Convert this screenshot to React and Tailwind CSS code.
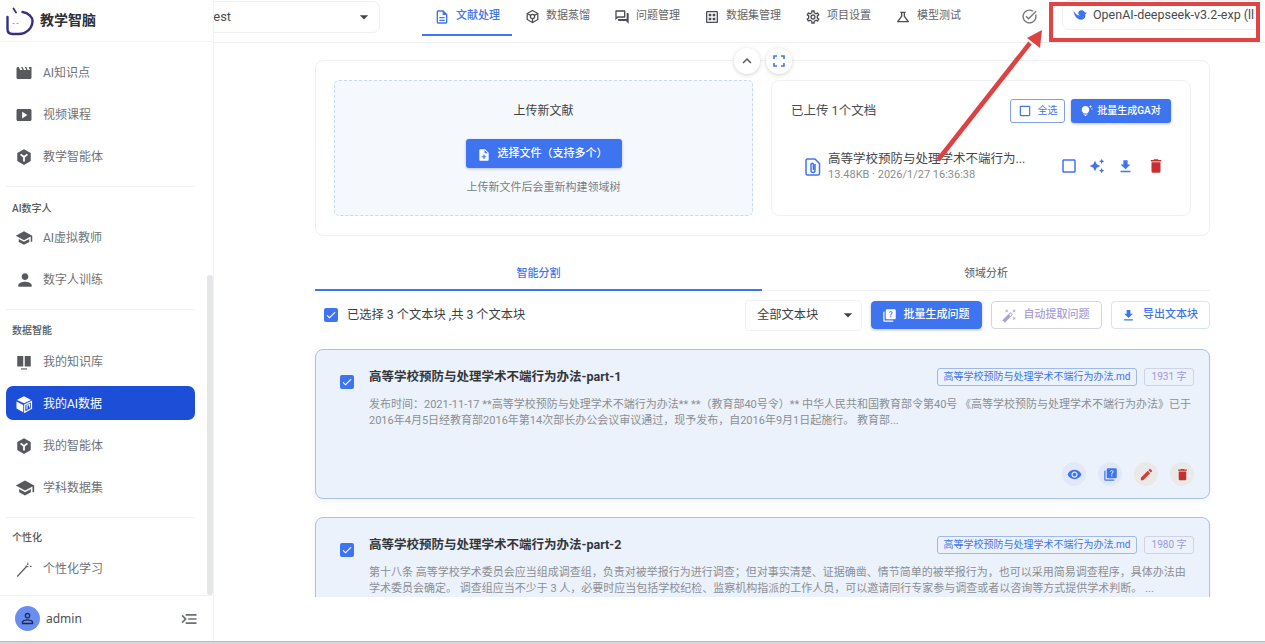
import React from "react";
import {
    MdAutoAwesome,
    MdAutoFixHigh,
    MdCheck,
    MdCheckBoxOutlineBlank,
    MdDelete,
    MdEdit,
    MdFileDownload,
    MdKeyboardArrowUp,
    MdMenuOpen,
    MdMovie,
    MdNoteAdd,
    MdOutlineDataset,
    MdOutlineDescription,
    MdOutlineForum,
    MdOutlineScience,
    MdOutlineSettings,
    MdPerson,
    MdPersonOutline,
    MdQuiz,
    MdSchool,
    MdSmartDisplay,
    MdTaskAlt,
    MdTipsAndUpdates,
    MdVisibility,
    MdArrowDropDown,
} from "react-icons/md";

const font = "font-['Roboto','Noto_Sans_CJK_SC',sans-serif]";

function HexIcon({ size = 18, outline = false }) {
    if (outline) {
        return (
            <svg width={size} height={size} viewBox="0 0 24 24" fill="none" stroke="currentColor" strokeWidth="2">
                <path d="M12 2.5l8.5 4.8v9.4L12 21.5l-8.5-4.8V7.3z" />
                <circle cx="12" cy="12" r="3.4" />
                <path d="M12 15.4v6M9 10.2L3.5 7.3M15 10.2l5.5-2.9" />
            </svg>
        );
    }
    return (
        <svg width={size} height={size} viewBox="0 0 24 24">
            <path d="M12 1.5l9 5.2v10.6l-9 5.2-9-5.2V6.7z" fill="currentColor" />
            <path d="M7.5 8.5L12 12l4.5-3.5M12 12v6" stroke="#fff" strokeWidth="2.4" fill="none" />
        </svg>
    );
}

function CubeIcon() {
    return (
        <svg width="18" height="18" viewBox="0 0 24 24">
            <path d="M12 1.5l9.5 5L12 11 2.5 6.500z" fill="#fff" />
            <path d="M2 8.500l9 4.700V23l-9-5z" fill="#fff" />
            <path d="M13 13.200l9-4.700V18l-9 5z" fill="none" stroke="#fff" strokeWidth="1.600" />
            <path d="M16 19v-5l3.500-1.500v4" fill="none" stroke="#fff" strokeWidth="1.400" />
        </svg>
    );
}

function BookIcon() {
    return (
        <svg width="18" height="18" viewBox="0 0 24 24" fill="currentColor">
            <path d="M3 4h8v14H3zM13 4h8v14h-8z" />
            <path d="M8 20.500h8v1.500H8z" />
        </svg>
    );
}

function WandIcon() {
    return (
        <svg width="18" height="18" viewBox="0 0 24 24" fill="none" stroke="currentColor" strokeWidth="1.500">
            <path d="M3 22L16 8" />
            <path d="M14 8l4 1M17 3.500v3M20 8.500h2" />
        </svg>
    );
}

function ClipFileIcon() {
    return (
        <svg width="16" height="18" viewBox="0 0 16 18" fill="none" stroke="#3f74f0" strokeWidth="1.500">
            <path d="M2.500 1h7.500l4.500 4.500v10a1.500 1.500 0 0 1-1.500 1.500H2.500A1.500 1.500 0 0 1 1 15.500v-13A1.500 1.500 0 0 1 2.500 1z" />
            <path d="M10 6v6.500a2 2 0 0 1-4 0V6.500a1.200 1.200 0 0 1 2.400 0V12" />
        </svg>
    );
}

function WhaleIcon() {
    return (
        <svg width="14" height="12" viewBox="0 0 24 20" fill="#3f74f0" className="shrink-0">
            <path d="M1 3c1 9 6 15 13 15 5 0 8-4 7-9 1-1 2-2 2.500-4-1 .6-2 .8-3 .6C19 3 17 2 14 2c-3 0-5 2-5 5 0 1 1 3 3 4-4 0-8-3-11-8z" />
        </svg>
    );
}

function Logo() {
    return (
        <svg width="34" height="34" viewBox="0 0 34 34" fill="none" strokeLinecap="round" className="shrink-0">
            <path d="M7.500 13v12c0 3 2 5 5 5h6c8 0 14-6 14-13 0-4-4-8-10-9" stroke="#35307f" strokeWidth="2.400" />
            <path d="M13.500 4.500l2.500 4" stroke="#35307f" strokeWidth="1.800" />
            <path d="M13 19.500h1M17 19.500h1" stroke="#9a9ab5" strokeWidth="1" />
        </svg>
    );
}

function Checkbox() {
    return (
        <span className="w-[14px] h-[14px] rounded-[2px] bg-[#3f74f0] flex items-center justify-center text-white shrink-0">
            <MdCheck size={12} />
        </span>
    );
}

function SideItem({ icon, label, active }) {
    return (
        <div
            className={`h-[34px] pt-[2px] ml-[6px] mr-[18px] rounded-[7px] flex items-center text-[12px] ${
                active ? "bg-[#1d4ed8] text-white" : "text-[#6f7276]"
            }`}
        >
            <span className={`w-[37px] pl-[9px] flex items-center ${active ? "text-white" : "text-[#57595d]"}`}>
                {icon}
            </span>
            <span>{label}</span>
        </div>
    );
}

function SideGroup({ title, items, labelClass }) {
    return (
        <div>
            <div className="h-px ml-[6px] mr-[18px] bg-[#f0f1f2]" />
            <div className={`h-[16px] pl-[12px] text-[10px] leading-[16px] text-[#55585c] font-medium ${labelClass}`}>
                {title}
            </div>
            <div className="flex flex-col gap-[8px] pb-[13px]">
                {items.map((it) => (
                    <SideItem key={it.label} {...it} />
                ))}
            </div>
        </div>
    );
}

function Sidebar() {
    return (
        <aside className="w-[214px] shrink-0 border-r border-[#f1f2f3] flex flex-col bg-white">
            <div className="h-[42px] shrink-0 border-b border-[#f2f3f4] flex items-center gap-[6px]">
                <Logo />
                <span className="text-[14px] font-bold text-[#2f3033]">教学智脑</span>
            </div>
            <div className="flex-1 relative overflow-hidden">
                <div className="pt-[13px]">
                    <div className="flex flex-col gap-[8px] pb-[13px]">
                        <SideItem icon={<MdMovie size={18} />} label="AI知识点" />
                        <SideItem icon={<MdSmartDisplay size={18} />} label="视频课程" />
                        <SideItem icon={<HexIcon />} label="教学智能体" />
                    </div>
                    <SideGroup
                        title="AI数字人"
                        labelClass="mt-[14px] mb-[3px]"
                        items={[
                            { icon: <MdSchool size={18} />, label: "AI虚拟教师" },
                            { icon: <MdPerson size={20} />, label: "数字人训练" },
                        ]}
                    />
                    <SideGroup
                        title="数据智能"
                        labelClass="mt-[13px] mb-[5px]"
                        items={[
                            { icon: <BookIcon />, label: "我的知识库" },
                            { icon: <CubeIcon />, label: "我的AI数据", active: true },
                            { icon: <HexIcon />, label: "我的智能体" },
                            { icon: <MdSchool size={20} />, label: "学科数据集" },
                        ]}
                    />
                    <SideGroup
                        title="个性化"
                        labelClass="mt-[12px] mb-[5px]"
                        items={[{ icon: <WandIcon />, label: "个性化学习" }]}
                    />
                </div>
                {/* scrollbar thumb */}
                <div className="absolute right-0 top-[233px] bottom-0 w-[6px] rounded-[3px] bg-[#e4e6e8]" />
            </div>
            <div className="h-[46px] shrink-0 border-t border-[#f1f2f3] flex items-center pl-[15px] pr-[14px] bg-white">
                <span className="w-[25px] h-[25px] rounded-full bg-[#6a8df0] flex items-center justify-center text-[#1c2a55]">
                    <MdPersonOutline size={17} />
                </span>
                <span className="ml-[6px] text-[12px] text-[#4b4e52] font-['Noto_Sans',sans-serif]">admin</span>
                <MdMenuOpen size={20} className="ml-auto text-[#6b6e72] -scale-x-100" />
            </div>
        </aside>
    );
}

const tabs = [
    { label: "文献处理", icon: <MdOutlineDescription size={16} />, active: true },
    { label: "数据蒸馏", icon: <HexIcon size={15} outline /> },
    { label: "问题管理", icon: <MdOutlineForum size={16} /> },
    { label: "数据集管理", icon: <MdOutlineDataset size={16} /> },
    { label: "项目设置", icon: <MdOutlineSettings size={16} /> },
    { label: "模型测试", icon: <MdOutlineScience size={16} /> },
];

function Header() {
    return (
        <header className="h-[43px] shrink-0 border-b border-[#f0f1f2] flex overflow-hidden relative">
            <div className="ml-[-20px] mt-[1px] w-[186px] shrink-0 h-[32px] border border-[#eef0f2] rounded-[7px] flex items-center justify-between pl-[14px] pr-[5px] text-[13px] text-[#4b4e52]">
                <span>test</span>
                <MdArrowDropDown size={20} className="text-[#444]" />
            </div>
            <nav className="ml-[42px] flex items-start h-[36px] shrink-0">
                {tabs.map((t) => (
                    <div
                        key={t.label}
                        className={`h-[36px] px-[12px] pb-[1px] flex items-center gap-[6px] text-[11px] border-b-2 whitespace-nowrap ${
                            t.active ? "border-[#3f74f0] text-[#3f74f0] font-medium" : "border-transparent text-[#63666a]"
                        }`}
                    >
                        <span className={`w-[16px] flex justify-center ${t.active ? "" : "text-[#4b4e52]"}`}>{t.icon}</span>
                        {t.label}
                    </div>
                ))}
            </nav>
            <MdTaskAlt size={17} className="ml-[48px] mt-[8px] shrink-0 text-[#77797d]" />
            <div className="ml-[24px] w-[240px] shrink-0 h-[30px] border border-[#f0f1f2] rounded-[7px] flex items-center pl-[10px] gap-[6px] text-[12.5px] text-[#484b4f] whitespace-nowrap overflow-hidden">
                <WhaleIcon />
                <span>OpenAI-deepseek-v3.2-exp (ll</span>
            </div>
        </header>
    );
}

function OutlineBtn({ children, className = "" }) {
    return (
        <div className={`h-[28px] pt-px rounded-[4px] border flex items-center justify-center gap-[7px] pr-[2px] text-[11px] font-medium ${className}`}>
            {children}
        </div>
    );
}

function UploadPanel() {
    return (
        <div className="relative border border-[#eff1f3] rounded-[8px] px-[18px] py-[19px] flex gap-[18px] h-[176px]">
            <div className="absolute -top-[13px] left-[418px] flex gap-[6px]">
                <span className="w-[26px] h-[26px] rounded-full bg-white shadow-[0_1px_4px_rgba(0,0,0,0.18)] flex items-center justify-center text-[#555]">
                    <MdKeyboardArrowUp size={18} />
                </span>
                <span className="w-[26px] h-[26px] rounded-full bg-white shadow-[0_1px_4px_rgba(0,0,0,0.18)] flex items-center justify-center text-[#3f74f0]">
                    <svg width="12" height="12" viewBox="0 0 12 12" fill="none" stroke="currentColor" strokeWidth="1.600">
                        <path d="M1 4V1h3M8 1h3v3M11 8v3H8M4 11H1V8" />
                    </svg>
                </span>
            </div>
            <div className="w-[419px] border border-dashed border-[#c5d9ef] rounded-[5px] bg-[#f5f9fe] flex flex-col items-center pt-[21px]">
                <div className="text-[12px] leading-[18px] text-[#3c3f43]">上传新文献</div>
                <div className="mt-[19px] w-[156px] h-[29px] pt-[2px] pr-[3px] rounded-[3px] bg-[#3f74f0] text-white flex items-center justify-center gap-[7px] text-[11px] font-medium shadow-[0_1px_3px_rgba(0,0,0,0.25)]">
                    <MdNoteAdd size={14} />
                    选择文件（支持多个）
                </div>
                <div className="mt-[12px] text-[11px] leading-[16px] text-[#7b7e83]">上传新文件后会重新构建领域树</div>
            </div>
            <div className="w-[420px] border border-[#f0f1f3] rounded-[8px] px-[19px] pt-[17px]">
                <div className="flex items-center h-[25px]">
                    <span className="pt-px text-[12.5px] text-[#4a4d51]">已上传 1个文档</span>
                    <div className="ml-auto w-[55px] h-[24px] rounded-[3px] border border-[#7ea0e6] flex items-center justify-center gap-[6px] text-[10px] text-[#3f74f0]">
                        <MdCheckBoxOutlineBlank size={14} />
                        全选
                    </div>
                    <div className="ml-[6px] w-[100px] h-[24px] rounded-[3px] bg-[#3f74f0] text-white flex items-center justify-center gap-[4px] text-[10px] font-medium shadow-[0_1px_3px_rgba(0,0,0,0.25)]">
                        <MdTipsAndUpdates size={12} />
                        批量生成GA对
                    </div>
                </div>
                <div className="mt-[28px] flex items-center pl-[14px]">
                    <ClipFileIcon />
                    <div className="ml-[7px] w-[231px]">
                        <div className="text-[12.5px] leading-[16px] text-[#44474b] whitespace-nowrap">高等学校预防与处理学术不端行为...</div>
                        <div className="text-[11px] leading-[16px] text-[#8a8d91] whitespace-nowrap">13.48KB · 2026/1/27 16:36:38</div>
                    </div>
                    <div className="ml-[1px] mb-[2px] flex items-center text-[#3f74f0]">
                        <MdCheckBoxOutlineBlank size={18} />
                        <MdAutoAwesome size={16} className="ml-[11px]" />
                        <MdFileDownload size={17} className="ml-[12px]" />
                        <MdDelete size={18} className="ml-[13px] text-[#c62f2f]" />
                    </div>
                </div>
            </div>
        </div>
    );
}

function Toolbar() {
    return (
        <div className="mt-[9px] h-[30px] flex items-center pl-[9px] gap-[9px]">
            <Checkbox />
            <span className="text-[12.25px] text-[#3d4044] whitespace-nowrap">已选择 3 个文本块 ,共 3 个文本块</span>
            <div className="ml-auto w-[117px] h-[31px] border border-[#f0f1f2] rounded-[4px] flex items-center justify-between pl-[11px] pr-[3px] text-[12.25px] text-[#3d4044]">
                全部文本块
                <MdArrowDropDown size={20} className="text-[#444]" />
            </div>
            <OutlineBtn className="w-[111px] bg-[#3f74f0] border-[#3f74f0] text-white shadow-[0_1px_3px_rgba(0,0,0,0.25)]">
                <MdQuiz size={15} />
                批量生成问题
            </OutlineBtn>
            <OutlineBtn className="w-[111px] border-[#d4d6de] text-[#a8a2d8]">
                <MdAutoFixHigh size={15} />
                自动提取问题
            </OutlineBtn>
            <OutlineBtn className="w-[99px] border-[#d9e2f2] text-[#3f74f0]">
                <MdFileDownload size={15} />
                导出文本块
            </OutlineBtn>
        </div>
    );
}

function RoundAction({ children, className }) {
    return <span className={`w-[24px] h-[24px] rounded-full flex items-center justify-center ${className}`}>{children}</span>;
}

function ChunkCard({ part, count, lines }) {
    return (
        <div className="h-[150px] shrink-0 rounded-[8px] border border-[#a9c2e6] bg-[#ecf2fb] shadow-[0_2px_6px_rgba(0,0,0,0.05)] pl-[24px] pr-[15px] flex">
            <div className="pt-[25px] w-[29px] shrink-0">
                <Checkbox />
            </div>
            <div className="flex-1 min-w-0 pt-[17px] pb-[12px] flex flex-col">
                <div className="flex items-center h-[19px]">
                    <span className="pt-px text-[12.5px] font-bold text-[#33363a]">高等学校预防与处理学术不端行为办法-part-{part}</span>
                    <span className="ml-auto h-[18px] w-[200px] rounded-[3px] border border-[#9fb9e8] flex items-center justify-center text-[10px] text-[#3f74f0]">
                        高等学校预防与处理学术不端行为办法.md
                    </span>
                    <span className="ml-[7px] h-[18px] w-[50px] rounded-[3px] border border-[#cfd3e8] flex items-center justify-center text-[10px] text-[#9d97dc]">
                        {count} 字
                    </span>
                </div>
                <div className="mt-[11px] text-[11px] leading-[16px] text-[#8b8e92] whitespace-nowrap">
                    {lines.map((l) => (
                        <div key={l}>{l}</div>
                    ))}
                </div>
                {/* card actions */}
                <div className="mt-auto flex justify-end gap-[12px]">
                    <RoundAction className="bg-[#e1e9f8] text-[#3f74f0]">
                        <MdVisibility size={15} />
                    </RoundAction>
                    <RoundAction className="bg-[#e1e9f8] text-[#3f74f0]">
                        <MdQuiz size={15} />
                    </RoundAction>
                    <RoundAction className="bg-[#e9e9ea] text-[#d73a3a]">
                        <MdEdit size={15} />
                    </RoundAction>
                    <RoundAction className="bg-[#e9e9ea] text-[#c62f2f]">
                        <MdDelete size={15} />
                    </RoundAction>
                </div>
            </div>
        </div>
    );
}

function Annotation() {
    return (
        <>
            <div className="absolute left-[1049px] top-[2px] w-[211px] h-[40px] border-[4px] border-[#e04444]" />
            <div className="absolute left-[1260px] top-0 w-[5px] h-[42px] bg-white" />
            <svg className="absolute left-[930px] top-[25px]" width="125" height="140" viewBox="0 0 125 140" fill="none">
                <path d="M8 135L100 18" stroke="#dd4242" strokeWidth="4.500" />
                <path d="M112 5L97 13 L110 23z" fill="#dd4242" />
            </svg>
        </>
    );
}

export default function App() {
    return (
        <div className={`w-[1265px] h-[644px] overflow-hidden relative bg-white flex flex-col ${font}`}>
            <div className="h-[641px] flex">
                <Sidebar />
                <main className="flex-1 min-w-0 flex flex-col">
                    <Header />
                    <div className="h-[554px] overflow-hidden pl-[101px] pr-[55px] pt-[17px]">
                        <UploadPanel />
                        <div className="mt-[18px] h-[37px] flex border-b border-[#eff1f3] text-[11px]">
                            <div className="w-[447px] pt-[5px] flex items-center justify-center text-[#3f74f0] font-medium border-b-2 border-[#3f74f0] -mb-px">
                                智能分割
                            </div>
                            <div className="flex-1 pt-[5px] flex items-center justify-center text-[#55585c]">领域分析</div>
                        </div>
                        <Toolbar />
                        <div className="mt-[19px] flex flex-col gap-[18px]">
                            <ChunkCard
                                part={1}
                                count={1931}
                                lines={[
                                    "发布时间：2021-11-17 **高等学校预防与处理学术不端行为办法** **（教育部40号令）** 中华人民共和国教育部令第40号 《高等学校预防与处理学术不端行为办法》已于",
                                    "2016年4月5日经教育部2016年第14次部长办公会议审议通过，现予发布，自2016年9月1日起施行。 教育部...",
                                ]}
                            />
                            <ChunkCard
                                part={2}
                                count={1980}
                                lines={[
                                    "第十八条  高等学校学术委员会应当组成调查组，负责对被举报行为进行调查；但对事实清楚、证据确凿、情节简单的被举报行为，也可以采用简易调查程序，具体办法由",
                                    "学术委员会确定。 调查组应当不少于 3 人，必要时应当包括学校纪检、监察机构指派的工作人员，可以邀请同行专家参与调查或者以咨询等方式提供学术判断。 ...",
                                ]}
                            />
                        </div>
                    </div>
                </main>
            </div>
            <div className="h-[3px] bg-[#d6d7d8] border-t border-[#b9babb]" />
            <Annotation />
        </div>
    );
}
